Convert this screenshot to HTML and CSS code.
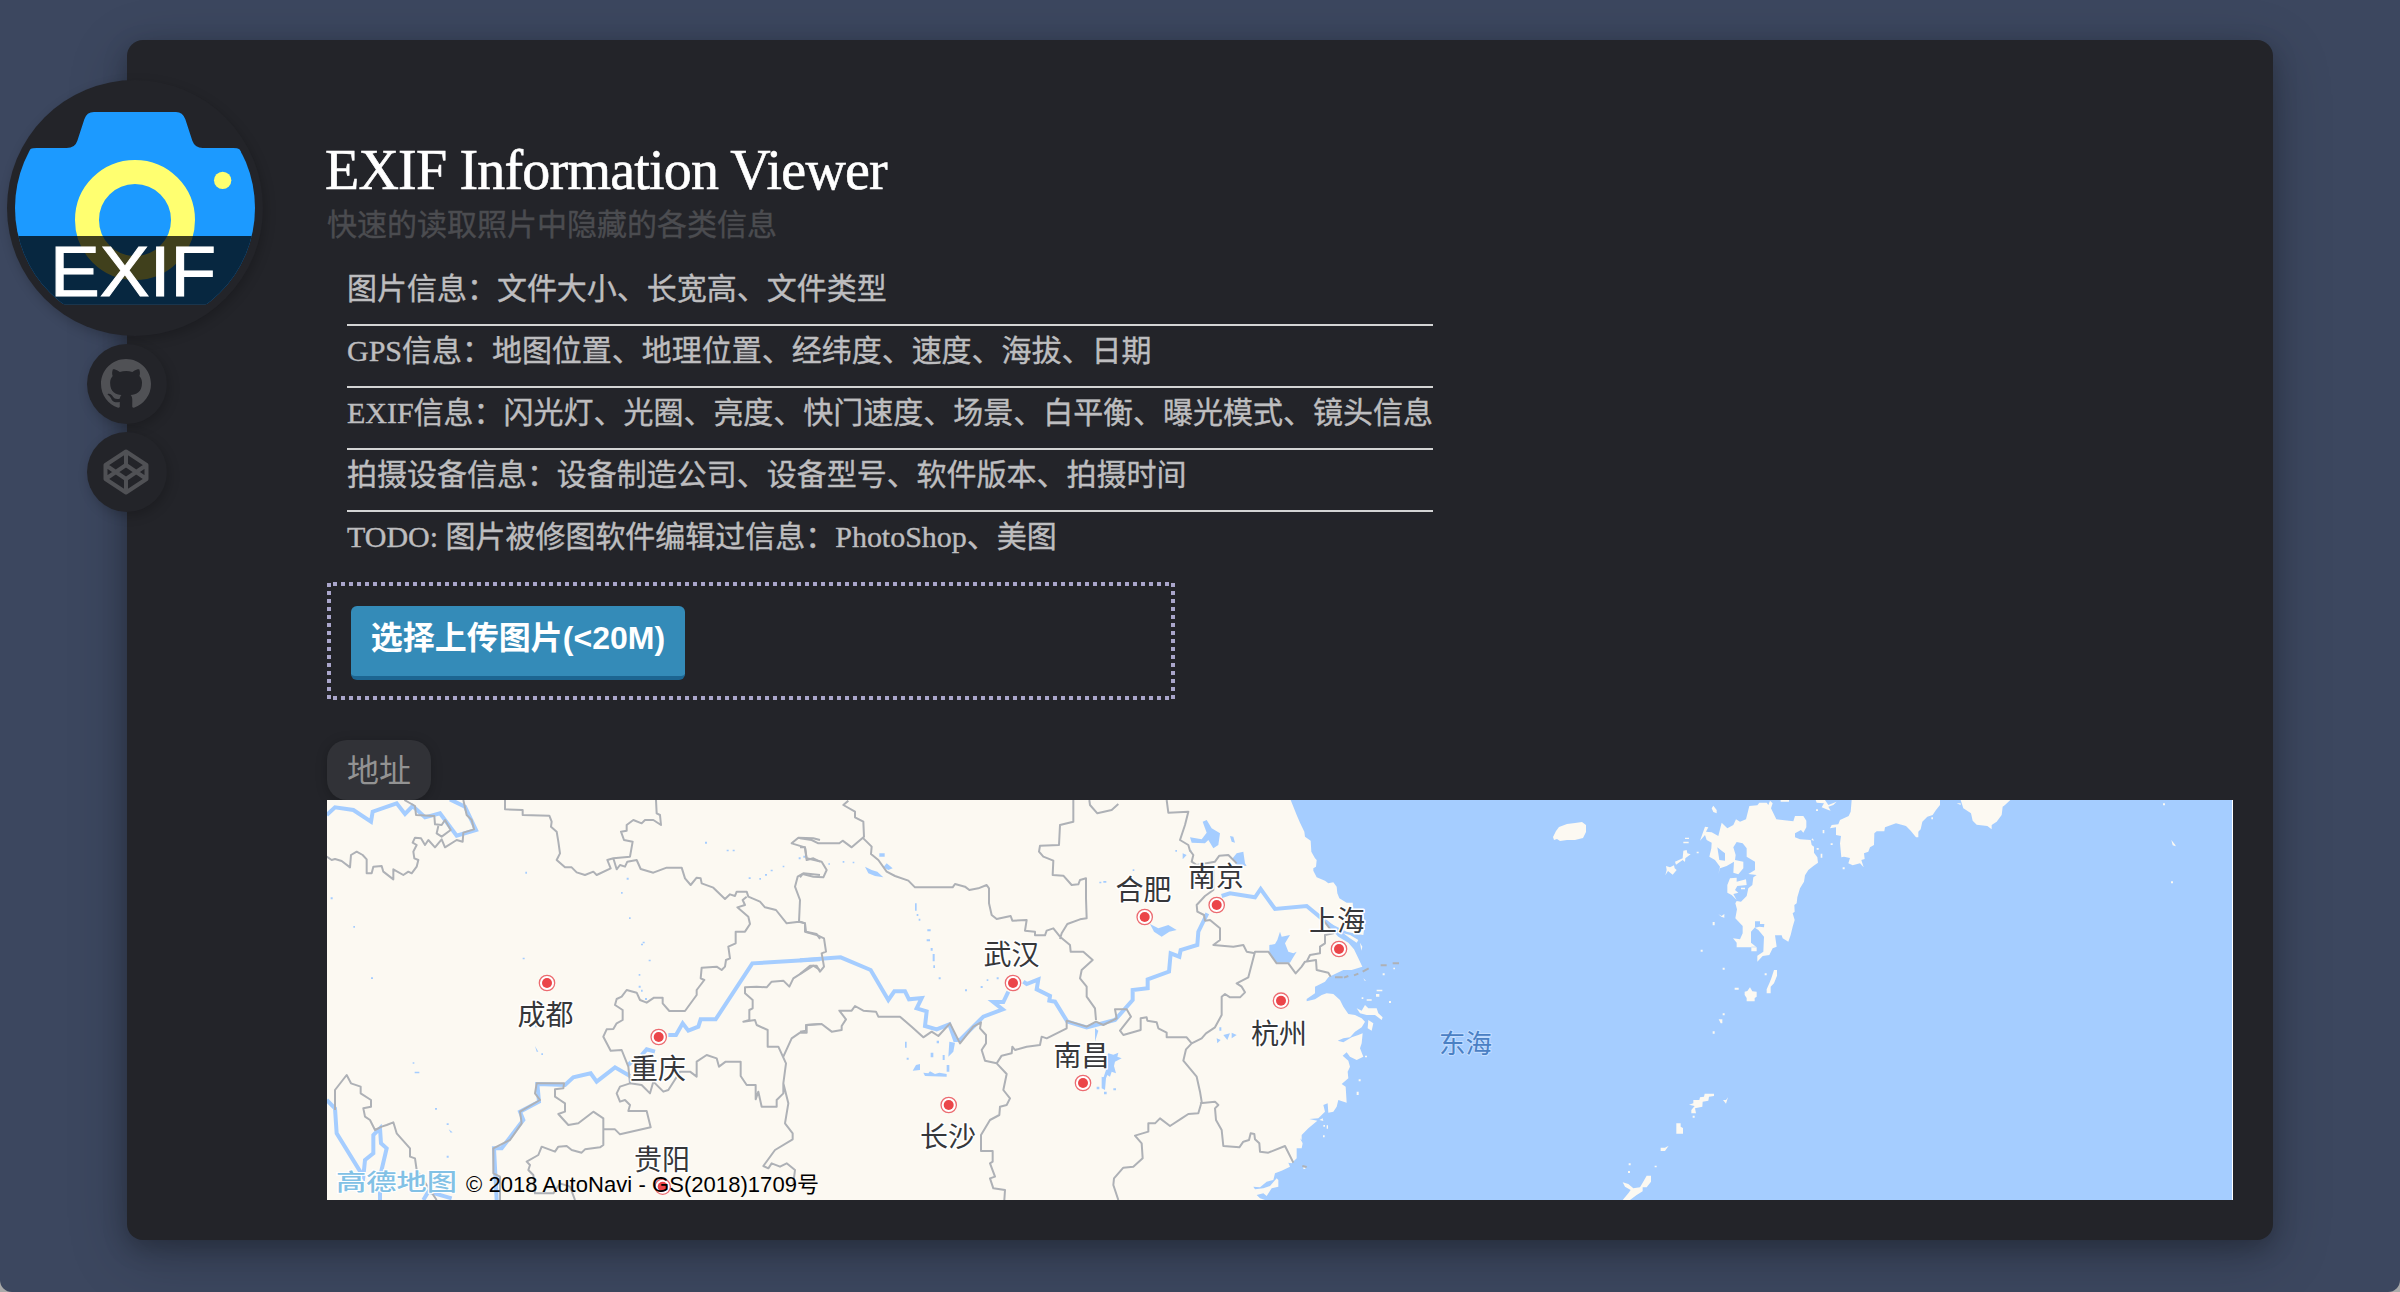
FILE: index.html
```html
<!DOCTYPE html>
<html lang="zh-CN">
<head>
<meta charset="utf-8">
<title>EXIF Information Viewer</title>
<link rel="stylesheet" href="styles.css">
</head>
<body>
<div class="window">
<main class="card">
  <aside class="rail">
    <a class="avatar">
      <svg viewBox="0 0 256 256" width="256" height="256">
        <defs><clipPath id="lens"><circle cx="128" cy="128" r="120"/></clipPath></defs>
        <g clip-path="url(#lens)">
          <g transform="translate(-7 -60) scale(.333333)">
            <path fill="#1c9aff" d="M40 853V440Q60 384 110 384H200Q225 384 232 362L253 298Q260 276 282 276H528Q548 276 556 298L577 362Q585 384 608 384H700Q725 384 725 400L770 440V853Z"/>
            <circle cx="405" cy="600" r="144" fill="none" stroke="#ffff70" stroke-width="72"/>
            <circle cx="668" cy="481" r="26" fill="#ffff70"/>
            <path fill="#000" fill-opacity=".75" d="M0 648H800V853H0Z"/>
          </g>
        </g>
        <text class="avatar-text" x="43" y="216" textLength="166" lengthAdjust="spacingAndGlyphs">EXIF</text>
      </svg>
    </a>
    <a class="badge">
      <svg viewBox="0 0 16 16" width="50" height="50"><path d="M8 0C3.58 0 0 3.58 0 8c0 3.54 2.29 6.53 5.47 7.59.4.07.55-.17.55-.38 0-.19-.01-.82-.01-1.49-2.01.37-2.53-.49-2.69-.94-.09-.23-.48-.94-.82-1.13-.28-.15-.68-.52-.01-.53.63-.01 1.08.58 1.23.82.72 1.21 1.87.87 2.33.66.07-.52.28-.87.51-1.07-1.78-.2-3.64-.89-3.64-3.95 0-.87.31-1.59.82-2.15-.08-.2-.36-1.02.08-2.12 0 0 .67-.21 2.2.82.64-.18 1.32-.27 2-.27s1.36.09 2 .27c1.53-1.04 2.2-.82 2.2-.82.44 1.1.16 1.92.08 2.12.51.56.82 1.27.82 2.15 0 3.07-1.87 3.75-3.65 3.95.29.25.54.73.54 1.48 0 1.07-.01 1.93-.01 2.2 0 .21.15.46.55.38A8.01 8.01 0 0 0 16 8c0-4.42-3.58-8-8-8Z"/></svg>
    </a>
    <a class="badge">
      <svg class="line-icon" viewBox="0 0 46 46" width="46" height="46"><path d="M23 2.5 43.5 16V30L23 43.500 2.500 30V16ZM2.500 16 23 30 43.500 16M2.500 30 23 16 43.500 30M23 2.500V16M23 30V43.500"/></svg>
    </a>
  </aside>

  <h1 class="title">EXIF Information Viewer</h1>
  <p class="subtitle">快速的读取照片中隐藏的各类信息</p>
  <ul class="features">
    <li>图片信息：文件大小、长宽高、文件类型</li>
    <li>GPS信息：地图位置、地理位置、经纬度、速度、海拔、日期</li>
    <li>EXIF信息：闪光灯、光圈、亮度、快门速度、场景、白平衡、曝光模式、镜头信息</li>
    <li>拍摄设备信息：设备制造公司、设备型号、软件版本、拍摄时间</li>
    <li>TODO: 图片被修图软件编辑过信息：PhotoShop、美图</li>
  </ul>

  <section class="dropzone">
    <button class="upload">选择上传图片(&lt;20M)</button>
  </section>

  <div class="tag">地址</div>
  <section class="map">
    <svg viewBox="0 0 1905 400" width="1905" height="400">
      <!-- mainland, coast from Jiangsu to Fujian -->
      <g class="land" transform="translate(873 -10) scale(.333333)">
        <path d="M-2619 30H272L278 45 290 75 300 98 313 125 315 140 332 152 334 185 345 205 350 210 348 230 340 235V242L350 262 375 272 385 280 400 277 410 290 412 310 418 325 440 338 458 338 460 360 475 365 490 375 495 400 490 435 470 432 440 425 400 405 375 390 385 408 415 440 445 458 462 478 475 505 487 530 455 540 430 540 405 552 385 562 375 575 345 590V610L320 627V634L345 628 365 615 380 610 400 612 420 630 430 650 445 672 465 675 485 685 495 695 485 712 465 725 450 742 430 745 413 752 430 757 455 742 475 735 488 730 485 760 480 775 490 800 470 810 450 800 440 787 428 797 445 812 450 830 443 845 445 865 425 882 437 890 440 938 415 930 410 950 400 965 385 968 383 940 370 945 375 965 355 985 328 987 352 992 325 1015 305 1035V1050L300 1045 308 1060 305 1075 290 1075V1105L275 1120 265 1118 270 1130 245 1142 225 1150 220 1170 200 1175 180 1192 160 1190 165 1198 190 1195 210 1188 230 1165 235 1170V1190L215 1195 200 1218 190 1210 170 1215 180 1225 195 1230H-2619Z"/>
        <path d="M470 655 485 662 495 645 505 655 530 655 535 670 548 682 545 690 525 675 500 675 480 670ZM505 690 520 700 515 722 503 715ZM430 430 450 435 475 450 470 458 450 445ZM480 458 487 470 484 482ZM548 550h6v6h-6ZM580 533h5v5h-5ZM490 565 498 572 494 572ZM530 599h17v5h-17ZM528 612h10v8h-10ZM567 633h6v6h-6ZM500 628h15v4h-15ZM485 622h5v5h-5ZM495 797h6v5h-6ZM476 868h6v6h-6ZM470 905h6v10h-6ZM358 990 368 985 370 993ZM370 1005h5v5h-5ZM380 1006h4v10h-4ZM369 1036h5v6h-5ZM310 1132h6v5h-6Z"/>
      </g>
      <!-- Kyushu, Shikoku and the southern islands -->
      <g class="land" transform="translate(1313 -10) scale(.333333)">
        <path d="M328 48 352 46 358 38 380 38 385 45 390 32 398 40 393 55 409 88 460 94 465 78 490 78 499 92V112L490 128 483 120 465 130V142L480 148 512 150 515 165 522 170 522 188 532 202 534 218 520 228 505 240 495 256 492 275 480 295 472 322 470 340 463 345 464 365 458 370 464 390 458 410 452 435 445 455 428 445 425 436 405 436 410 470 398 475 388 495 368 498 352 515 352 497 370 485 372 440 355 420 345 413 358 410 372 412 373 402 360 402V394H345V412L333 425V458L350 472V484H334V472H290V458L279 445 300 448 308 430V408L286 385 291 358 286 340 290 333 303 335 320 318 325 295 337 285 340 262 350 255 325 252 345 240V215L320 200V175L308 160 290 156 280 172 287 195 285 210 310 215V235L295 253 280 248 282 215 260 228 240 235 235 252 240 230 225 210 208 200 214 175 215 158 200 150 195 135 180 152 195 110 205 112 198 125 215 127 235 138 245 98 262 115 280 105 288 88 300 95 318 88Z"/>
        <path d="M262 285 270 265 290 263 290 275 318 268 320 285 292 288 285 300 295 308 280 312 290 330 275 315 262 308ZM303 293h12v5h-12ZM78 228 90 232 102 226 104 235 110 240 98 254 84 243 76 256 80 240ZM105 215 128 205 130 182 140 180 142 190 152 193 136 205 135 216 128 210 108 224ZM135 143h12v4h-12ZM130 155h16v5h-16ZM170 185h6v5h-6ZM215 55 220 47 230 60V70L220 66ZM235 373 245 378 253 372V383L244 380ZM218 396h6v10h-6ZM182 479h6v6h-6ZM248 533h6v6h-6ZM284 593h12v6h-12ZM374 550h6v6h-6ZM402 540H411V557L402 580 392 590V610H380V598L388 580 394 565ZM314 605 322 603 330 592 337 604 350 605V620L344 624V634H320V624L314 615ZM248 670h6v6h-6ZM236 688H247V700H242ZM218 724h6v7h-6ZM160 930 178 930 180 922 192 920 194 911 222 911V918L207 920 205 932 188 935 187 950 165 955 168 970H154V960L164 948 147 944 160 940ZM249 930H258L264 922 258 941ZM158 977h6v6h-6ZM109 1000H122V1010L129 1014V1031H109ZM62 1073H75L86 1067 75 1083H62ZM44 1127h6v5h-6ZM20 1157H33V1175L20 1192 8 1192V1204L-10 1215 -30 1230H-52L-35 1210 -28 1200 -45 1190 -52 1177 -35 1182 -20 1195 0 1192 8 1178ZM-34 1120h6v6h-6ZM-36 1143h6v6h-6Z"/>
        <path d="M635 30H900V45L888 60 878 75 862 80 847 95 842 118 835 125V142H828L812 122 798 108 768 100 735 112 733 124 710 124 703 130 702 165 690 172 685 185 672 190 674 207 664 210 671 232 660 220 638 226 625 220 630 204 612 200 604 202 600 160 603 138 588 135 588 112 570 115 575 105 595 103 600 90 626 78 632 65ZM527 30H555L565 45 590 35 580 45 565 50 572 62 565 60 545 52 552 40 530 38ZM528 58h6v5h-6ZM548 120h5v10h-5ZM572 160h6v5h-6ZM530 174h6v5h-6ZM542 191h5v12h-5ZM608 232h6v6h-6ZM962 30H1111L1095 45 1088 50 1085 75 1070 95 1055 105 1055 118 1042 108 1010 104 998 92 993 70 970 55ZM950 40H962V45ZM422 30H447V35H422ZM874 82h5v6h-5ZM518 145 522 152 514 150Z"/>
        <path d="M1569 40h6v6h-6ZM1594 150 1606 165 1607 169 1598 166ZM1593 274h6v6h-6Z"/>
        <path class="water" d="M232 172 245 182 255 190V212L238 210ZM334 470h16v2h-16Z"/>
      </g>
      <path class="land" d="M1226 37 1229 31 1232 27 1240 24 1248 23 1255 22 1259 25V32L1256 38 1248 40 1240 40 1233 41 1230 39 1227 40Z"/>
      <!-- lakes -->
      <g class="water">
        <g transform="translate(473 -10) scale(.333333)">
          <path d="M1208 95 1220 90 1235 115 1260 130 1255 165 1240 175 1225 150 1215 160 1175 158 1170 142 1205 148 1220 128ZM1310 190 1330 185 1335 220 1340 228 1310 225 1298 205ZM1290 138 1300 140 1305 158 1295 155ZM1050 402 1075 415 1105 405 1130 420 1108 425 1085 440 1062 425ZM1408 465 1425 462 1432 450 1440 425 1445 440 1470 435 1455 460 1465 485 1480 490 1490 485 1478 505 1470 518 1430 518 1408 490ZM238 190h16v10h-16ZM260 220 278 235 265 240 250 232ZM195 230 215 240 232 245 250 262 225 258 205 250ZM925 790 940 794 955 788 952 800 965 805 945 815 942 828 948 850 935 845 930 860 922 855 912 880 908 870 918 840 905 835ZM905 860 918 865 915 900 905 895ZM885 715 895 722 885 755ZM448 755 465 758 460 785 445 800ZM348 825 360 822 360 840 338 842ZM370 848 385 850 390 844 405 852 418 848 440 852 440 860 375 858ZM392 788h8v14h-8ZM315 755h5v18h-5ZM428 795h6v15h-6ZM410 752h7v8h-7ZM440 825h8v20h-8ZM1148 190 1160 195 1148 208ZM345 340h5v22h-5ZM350 372h5v6h-5ZM356 386h5v6h-5ZM382 418h10v6h-10ZM380 448h10v6h-10ZM392 474h6v8h-6ZM398 492h6v22h-6ZM400 526h5v8h-5ZM416 562h6v6h-6ZM495 598h6v6h-6ZM542 588h6v6h-6ZM560 568h5v5h-5ZM590 562h6v6h-6ZM998 238h5v5h-5ZM910 273h9v5h-9ZM898 275h6v5h-6ZM85 220h5v4h-5ZM128 213h5v5h-5ZM158 215h5v5h-5ZM1250 745 1262 750 1252 760ZM1270 735 1290 730 1282 750ZM1295 728 1310 735 1295 745ZM1258 712h6v10h-6ZM890 890h8v8h-8ZM912 905h8v8h-8ZM940 895h8v6h-8ZM320 803h6v6h-6ZM1126 180h5v5h-5ZM1168 180h6v5h-6Z"/>
        </g>
        <g transform="translate(-7 -10) scale(.333333)">
          <path d="M1155 155h6v6h-6ZM1220 179h6v5h-6ZM1238 179h6v5h-6ZM1352 239h6v5h-6ZM1335 252h6v5h-6ZM1318 264h5v5h-5ZM1286 262h6v5h-6ZM1388 227h5v5h-5ZM1436 202h6v6h-6ZM1450 197h6v6h-6ZM616 245h5v6h-5ZM920 263h6v6h-6ZM903 306h5v5h-5ZM927 382h5v5h-5ZM968 455h6v5h-6ZM963 461h6v5h-6ZM986 509h6v5h-6ZM608 503h6v5h-6ZM956 552h5v5h-5ZM956 587h6v6h-6ZM963 599h5v6h-5ZM975 624h6v6h-6ZM32 322h6v6h-6ZM100 408h5v5h-5ZM153 562h6v5h-6ZM645 706h6v6h-6ZM645 768 655 785 650 785ZM664 790h5v5h-5ZM284 845h14v5h-14ZM278 817h5v4h-5ZM345 954h6v5h-6ZM380 1000h6v5h-6ZM386 1018 398 1027 392 1028ZM380 1097h6v6h-6Z"/>
        </g>
      </g>
      <!-- rivers -->
      <g class="river">
        <g transform="translate(-7 -10) scale(.333333)">
          <path d="M20 75 45 52 100 60 153 95 158 65 230 40 255 72 278 48 315 82 360 70 410 137 468 120 435 50 390 28M20 930 45 955 50 1030 130 1160 135 1110 160 1090V1035L180 1015 183 1060 200 1075 180 1160V1230M530 1230 522 1075 545 1075 610 990 600 965 657 935 652 882 735 885 760 862 812 850 830 875 885 832 930 858M925 825 935 815M965 795 980 778 1005 785M1045 735 1068 735 1088 700 1105 722 1135 710 1142 688H1187L1297 520 1500 508M310 1230 325 1205 395 1225"/>
        </g>
        <g transform="translate(473 -10) scale(.333333)">
          <path d="M0 511 122 502 212 540 265 630 283 604H315L327 628 365 624 350 655 380 664 375 708 410 718 448 703 465 750H480L540 690 550 680 608 658 580 636H610L625 605M670 575 680 582 715 568 710 598 750 618 748 632 765 635 802 695 860 712 945 690 998 630V600L1043 595V568L1107 545 1112 490 1138 500 1142 480 1192 465 1195 425 1222 370M1265 318 1290 310 1365 322 1382 297 1425 357 1520 348 1565 385 1620 430"/>
        </g>
      </g>
      <!-- province borders -->
      <g class="border">
        <g transform="translate(-7 -10) scale(.333333)">
          <path d="M20 200 35 210 45 207 65 213 90 232 93 195 110 185 128 195 140 208V250H155L160 230 185 228 190 245 220 268V238L250 255 265 245 275 250 290 230 295 210 283 205 280 185 290 165 278 158 285 143 303 145 315 165 325 150 345 172 365 148 375 172 410 150 428 155 430 128 462 118 455 90 440 75 430 30M253 30 285 48 288 75 343 78 345 103 365 105 375 90 392 120 365 140 350 130 355 108M555 30V58L608 60V75L688 77 695 95 693 110 710 125 715 155 720 190 710 210 735 232H755L770 247 795 255 820 245 830 255 872 235 862 210 880 205 930 200 938 155 912 150 903 125 920 122 920 105 940 90 965 100 975 90H1000L1023 105 1020 75 1010 70 1008 30M880 205 890 238 900 225 915 230 922 215 950 210 962 237 1000 248 1040 233H1085L1095 265 1112 285 1130 263 1142 265 1145 280 1180 293 1215 327 1230 313 1245 318 1250 305 1280 305 1285 320 1320 335 1335 352 1368 360 1400 400 1437 395 1455 400 1458 425 1490 432 1500 447M1280 320 1268 330 1275 345 1252 352 1285 380 1290 402 1275 425H1247V460L1225 470 1230 505 1218 510 1215 530 1205 540 1190 530 1145 533 1142 565 1153 570 1130 600V615L1095 663H1048L1028 640V623H1002L980 638 960 630 950 608 920 600 905 620 890 627 885 645 908 660V690L890 700 880 717 860 718 850 740 872 782 905 780 925 830 930 880 900 890 890 910 900 935 915 930 930 945 925 963H980L992 1012 900 1033 885 1018H850V1065L840 1072 795 1078 785 1088 755 1080 740 1068 715 1070 705 1085 665 1070 655 1095 620 1115 630 1125 625 1140 640 1155 645 1210H700L720 1180 750 1190 765 1230M850 1065V985L820 965 775 1000 745 1005 715 972 735 965V940L720 930 705 920V898L730 895 732 880H650L645 910 660 930 600 965 605 1000 570 1050 520 1075V1150L540 1160V1230M930 880 965 885 990 910 1000 875 1030 905 1045 900 1080 845 1110 845 1130 860V815L1160 795 1190 805 1197 830 1217 815H1262V858L1280 885H1307V928L1315 905 1325 950H1370V930L1390 910V880L1398 820 1375 770H1343V720L1310 705 1305 690 1270 695 1288 690V660L1298 655V630L1275 610V592L1310 590 1340 592 1355 575 1390 572 1408 590 1420 565 1480 527 1500 540M1390 800 1415 745 1440 728H1460V705L1500 702M1390 880 1405 940 1395 1000 1418 1030V1048L1365 1080 1330 1128 1345 1135 1355 1120 1380 1130 1400 1120 1425 1140 1420 1180M1500 150 1480 145 1435 143 1415 160 1455 172 1460 210 1480 205 1500 215M1500 255 1450 250 1433 260 1425 290 1440 330 1437 395M45 960V900L80 855 93 880 122 890V910L153 930V950L130 955 135 980 150 990 165 1020 185 1010 200 1005 220 997 230 1030 270 1075V1100L285 1105 290 1140 350 1230"/>
        </g>
        <g transform="translate(473 -10) scale(.333333)">
          <path d="M0 145 35 150 55 160H118L128 152 155 172 192 140 190 95 165 82V65L130 45 145 32M190 145 215 170 213 192 235 210 260 245 285 258 325 272 345 292H458L465 282 495 290 508 300 535 295 560 285 567 295V340L575 375 590 387 632 378 637 392 680 390 675 422 705 425 705 436H735L740 422 760 415 780 440 810 465 812 485 850 485 878 510 845 540 840 565 860 590V620L885 655 888 690M0 172H15L20 205 65 215 80 240 70 262 40 260 8 252 0 262M0 395 15 400V425L50 435 72 445 78 485 65 490 72 530 60 545 50 527H30L0 552M0 725 18 722V705L65 702 95 725 125 720 125 708 138 688 118 662 155 662 165 648 190 662 228 665 235 680H300L335 710 370 742 395 725 415 738 450 700 480 760 520 710 543 697 540 715 558 735V760L545 780 555 812 590 820 620 852 610 900 630 925 620 945 600 950 598 975 570 990 543 1035V1083H578V1115L570 1120 585 1160 570 1165 580 1195 615 1200 613 1230M590 820 605 797 635 790 637 770 645 780 680 770 720 765 725 740 740 745 800 715V692L860 710 888 695 910 705 950 685 945 658H980L993 680 960 722 970 735 1022 720V685L1040 682 1042 692 1070 697 1075 715 1100 728 1100 742H1160L1175 760 1205 745 1218 730 1245 712 1265 675V620L1275 612 1290 622H1320L1335 607 1325 590 1310 580 1345 562 1365 485H1405L1430 520H1465L1487 550 1505 530 1515 515 1548 510 1550 540 1585 548 1592 560M820 30V95L780 105 777 165 720 167 717 185 730 200 760 212 758 255 790 257 815 285 835 283 840 270 858 265V325L860 385 840 388 802 402 785 430 780 447M868 30 870 45 892 70 935 60 955 42M1100 30 1105 68 1165 65 1155 105 1140 150 1165 165 1170 182 1180 195 1175 215 1190 225 1245 215 1258 197 1285 195 1305 215 1310 220M1240 240V300L1215 318 1190 345 1192 365 1212 375 1215 392 1230 390 1260 415V450L1240 465 1300 470 1330 465 1340 485 1365 490M1520 515 1530 495 1560 490 1560 470 1575 460 1575 435 1600 430 1570 390M1175 760 1158 778 1150 812 1190 860 1200 905 1205 935 1195 970 1165 972 1145 985 1110 1008 1080 985 1065 1000H1045V1025L1005 1037 1025 1060 1028 1105 1000 1130 970 1133 942 1165 940 1185 955 1230M1200 940 1245 935 1255 945 1245 955 1248 990 1265 1020 1270 1068 1318 1072 1330 1055 1347 1050 1352 1030 1363 1032 1365 1048 1378 1060 1380 1085 1405 1088 1455 1068 1480 1118"/>
          <path d="M1605 562H1628M1632 563 1645 558M1662 556 1675 551M1688 545 1706 535M1742 526H1760M1778 520H1797M1507 1128 1520 1131"/>
        </g>
      </g>
      <g class="markers">
        <g id="m"><circle class="ring" cx="220" cy="183" r="7.7"/><circle class="dot" cx="220" cy="183" r="5"/></g>
        <use href="#m" x="111.700" y="54"/><use href="#m" x="115.700" y="203.700"/><use href="#m" x="466"/><use href="#m" x="597.700" y="-66"/><use href="#m" x="669.700" y="-78"/><use href="#m" x="536" y="100"/><use href="#m" x="401.700" y="122"/><use href="#m" x="792" y="-34"/><use href="#m" x="734" y="17.700"/>
      </g>
      <g class="city">
        <text x="218.500" y="225">成都</text><text x="331" y="279">重庆</text><text x="335" y="370">贵阳</text><text x="684.500" y="165">武汉</text><text x="816.500" y="100">合肥</text><text x="889" y="87">南京</text><text x="754.500" y="265.500">南昌</text><text x="621" y="347">长沙</text><text x="952" y="243.500">杭州</text><text x="1010" y="131">上海</text>
        <text class="sea" x="1138.500" y="252.500">东海</text>
      </g>
      <text class="map-logo" transform="translate(9 390) scale(1.345 1)">高德地图</text>
      <text class="copyright" x="139" y="391.500" textLength="353">© 2018 AutoNavi - GS(2018)1709号</text>
    </svg>
  </section>
</main>
</div>
</body>
</html>
```
FILE: styles.css
```css
* { box-sizing: border-box; }

html { background: #a9a9a9; }

body {
  margin: 0;
  font-family: "Liberation Serif", "Noto Sans CJK SC", serif;
}

.window {
  display: flex;
  height: 1292px;
  padding: 40px 127px 52px;
  border-radius: 0 0 12px 12px;
  background: #3c475f;
  overflow: hidden;
}

.card {
  position: relative;
  display: flex;
  flex-direction: column;
  align-items: flex-start;
  width: 2146px;
  height: 1200px;
  padding: 100px 40px 40px 200px;
  border-radius: 16px;
  background: #232429;
  box-shadow: 0 16px 60px rgba(0, 0, 0, .22), 0 8px 24px rgba(0, 0, 0, .22);
}

/* the rail hangs over the left edge of the card */
.rail {
  position: absolute;
  top: 40px;
  left: -120px;
  display: flex;
  flex-direction: column;
  align-items: center;
  gap: 8px;
  width: 240px;
}

.avatar,
.badge {
  display: flex;
  align-items: center;
  justify-content: center;
  border-radius: 50%;
  background: #232429;
  box-shadow: 2px 4px 12px rgba(0, 0, 0, .2);
}

.avatar {
  align-self: flex-start;
  width: 256px;
  height: 256px;
}

.avatar-text {
  font: 71px "Liberation Sans", sans-serif;
  fill: #fff;
  stroke: #fff;
  stroke-width: 1px;
}

.badge {
  width: 80px;
  height: 80px;
  padding-right: 2px;
  fill: #505155;
}

.line-icon {
  fill: none;
  stroke: #505155;
  stroke-width: 4;
  stroke-linejoin: round;
}

.title {
  margin: 0 0 0 -2px;
  font-size: 56px;
  font-weight: 400;
  line-height: 60px;
  letter-spacing: -.8px;
  color: #fff;
  -webkit-text-stroke: .6px #fff;
}

.subtitle {
  margin: 0;
  font-size: 30px;
  line-height: 50px;
  color: #4b4c50;
  -webkit-text-stroke: .4px #4b4c50;
}

.features {
  width: 1086px;
  margin: 14px 0 20px 20px;
  padding: 0;
  list-style: none;
  font-size: 30px;
  line-height: 50px;
  letter-spacing: -.02px;
  color: #bdbdbf;
  -webkit-text-stroke: .4px #bdbdbf;
  white-space: nowrap;
}

.features li {
  height: 62px;
  border-bottom: 2px solid #d3d4d4;
}

.features li:last-child {
  height: 50px;
  border: 0;
}

.dropzone {
  --dot: #aaa6cb;
  width: 848px;
  height: 118px;
  padding: 24px;
  background:
    repeating-linear-gradient(90deg, var(--dot) 0 4px, transparent 4px 8px) 6px 0 / 836px 4px no-repeat,
    repeating-linear-gradient(90deg, var(--dot) 0 4px, transparent 4px 8px) 6px 114px / 836px 4px no-repeat,
    repeating-linear-gradient(var(--dot) 0 4px, transparent 4px 8px) 0 1px / 4px 116px no-repeat,
    repeating-linear-gradient(var(--dot) 0 4px, transparent 4px 8px) 844px 1px / 4px 116px no-repeat;
}

.upload {
  display: block;
  width: 334px;
  height: 74px;
  padding: 2px 0 8px;
  border: 0;
  border-bottom: 4px solid #1c6591;
  border-radius: 6px;
  background: #348bb8;
  font: 700 32px/60px "Liberation Sans", "Noto Sans CJK SC", sans-serif;
  color: #fff;
  white-space: nowrap;
}

.tag {
  height: 60px;
  margin-top: 40px;
  padding: 0 20px;
  border-radius: 20px;
  background: #313237;
  box-shadow: 0 2px 12px rgba(0, 0, 0, .22);
  font-size: 32px;
  line-height: 62px;
  color: #939393;
}

.map {
  position: relative;
  width: 1906px;
  height: 400px;
  border-right: 1px solid #fff;
  background: #a5cdff;
  overflow: hidden;
}

.map svg { display: block; }
.land { fill: #fcf9f2; }
.water { fill: #a5cdff; }
.river { fill: none; stroke: #a5cdff; stroke-width: 12; }
.border { fill: none; stroke: #aeb1b6; stroke-width: 6; stroke-linejoin: round; }
.ring { fill: #fff; stroke: #ec6b70; stroke-width: 1.3; }
.dot { fill: #eb4549; }

.city {
  font: 400 28px "Noto Sans CJK SC", sans-serif;
  text-anchor: middle;
  fill: #36373a;
  stroke: #fff;
  stroke-width: 3px;
  stroke-linejoin: round;
  paint-order: stroke;
}

.city .sea {
  font-size: 26.5px;
  fill: #4a80c4;
  stroke: #c3ddff;
  stroke-width: 2px;
}

.map-logo {
  font: 500 22.5px "Noto Sans CJK SC", sans-serif;
  fill: #82c1e5;
  stroke: #fff;
  stroke-width: 2px;
  paint-order: stroke;
}

.copyright {
  font: 22px "Liberation Sans", "Noto Sans CJK SC", sans-serif;
  fill: #000;
}
```
